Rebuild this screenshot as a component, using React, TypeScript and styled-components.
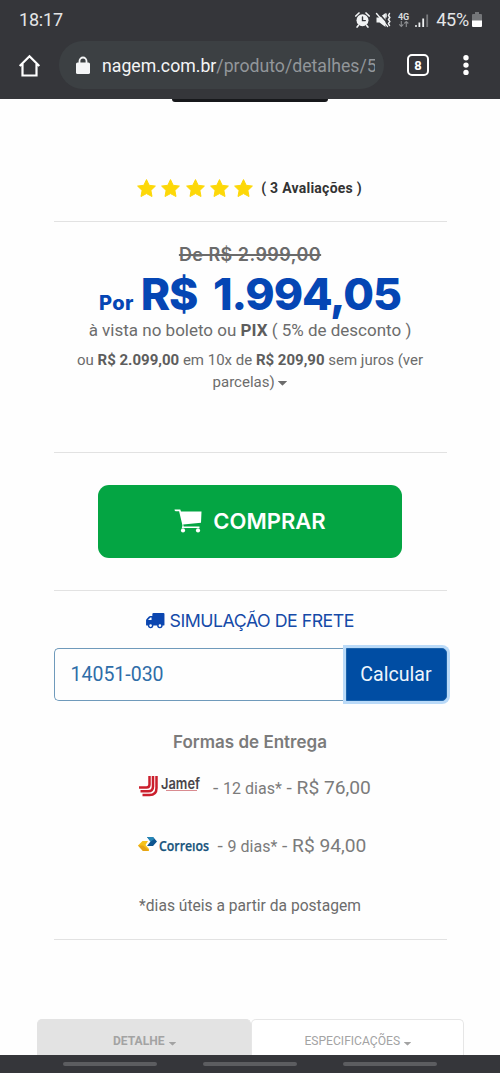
import React from "react";
import styled, { createGlobalStyle } from "styled-components";

const GlobalStyle = createGlobalStyle`
  * { box-sizing: border-box; }
  body { margin: 0; background: #fff; font-family: Roboto, "Liberation Sans", sans-serif; }
  svg { flex: none; overflow: visible; }
`;

const Screen = styled.div`
  width: 500px;
  height: 1073px;
  display: flex;
  flex-direction: column;
  overflow: hidden;
  background: #fefefe;
`;

const BrowserChrome = styled.header`
  flex: none;
  height: 99px;
  background: #35363a;
  color: #f1f3f4;
`;

const StatusBar = styled.div`
  height: 41px;
  padding: 0 18px 2px 19px;
  display: flex;
  align-items: center;
  justify-content: space-between;
  font-size: 18px;
  letter-spacing: -0.2px;
  color: #e4e5e7;
`;

const StatusIcons = styled.div`
  display: flex;
  align-items: center;
`;

const Battery = styled.span`
  margin: 0 3px 0 6px;
  letter-spacing: -0.2px;
`;

const Toolbar = styled.div`
  height: 48px;
  display: flex;
  align-items: center;
  padding-left: 18px;
`;

const AddressBar = styled.div`
  width: 325px;
  height: 48px;
  margin-left: 17px;
  border-radius: 24px;
  background: #3c4043;
  display: flex;
  align-items: center;
  padding-left: 17px;
`;

const Url = styled.div`
  width: 273px;
  margin-left: 12px;
  padding-top: 1px;
  overflow: hidden;
  white-space: nowrap;
  font-size: 17.7px;
  line-height: 24px;
  color: #f4f5f6;
  span { color: #92969a; letter-spacing: 0; }
`;

const TabCount = styled.div`
  width: 22px;
  height: 22px;
  margin-left: 23px;
  border: 2px solid #fff;
  border-radius: 5px;
  display: grid;
  place-items: center;
  font: bold 13px/1 Roboto, sans-serif;
  color: #fff;
`;

const MenuButton = styled.div`
  margin-left: 34px;
  display: flex;
`;

const Page = styled.main`
  flex: 1;
  min-height: 0;
  display: flex;
  flex-direction: column;
  align-items: center;
`;

const ProductEdge = styled.div`
  flex: none;
  width: 156px;
  height: 3px;
  border-radius: 0 0 4px 4px;
  background: #17181b;
`;

const Section = styled.section<{ $height: number; $top?: number }>`
  flex: none;
  width: 393px;
  height: ${(p) => p.$height}px;
  padding-top: ${(p) => p.$top ?? 0}px;
  border-bottom: 1px solid #e2e2e2;
  display: flex;
  flex-direction: column;
  align-items: center;
`;

const Rating = styled.div`
  display: flex;
  align-items: center;
  height: 22px;
  margin-right: 1px;
`;

const Stars = styled.div`
  display: flex;
  gap: 5.3px;
`;

const Reviews = styled.strong`
  margin-left: 8px;
  font-size: 14px;
  color: #333;
  white-space: nowrap;
  letter-spacing: 0.25px;
`;

const OldPrice = styled.div`
  height: 22px;
  font: 600 18px/22px Inter, sans-serif;
  letter-spacing: 0.45px;
  color: #6b6b6b;
  text-decoration: line-through;
  text-decoration-thickness: 1.5px;
`;

const Price = styled.div`
  height: 50px;
  margin-top: 3px;
  display: flex;
  align-items: baseline;
  gap: 7px;
  white-space: nowrap;
  font: 800 44.5px/50px Inter, sans-serif;
  letter-spacing: -1.1px;
  word-spacing: 7px;
  color: #0546b4;
`;

const PricePrefix = styled.span`
  font-size: 20px;
  letter-spacing: 0.3px;
`;

const Terms = styled.div<{ $size: number; $line: number; $spacing?: number; $top?: number }>`
  margin-top: ${(p) => p.$top ?? 0}px;
  font-size: ${(p) => p.$size}px;
  line-height: ${(p) => p.$line}px;
  letter-spacing: ${(p) => p.$spacing ?? 0}px;
  color: #6c6c6c;
  white-space: nowrap;
  text-align: center;
  strong { color: #5d5d5d; }
  svg { vertical-align: 2px; }
`;

const BuyButton = styled.button`
  width: 304px;
  height: 73px;
  padding: 0 0 1px;
  border: 0;
  border-radius: 11px;
  background: #04a543;
  color: #fff;
  display: flex;
  align-items: center;
  justify-content: center;
  gap: 11px;
  font: 600 22px Inter, sans-serif;
`;

const ShippingTitle = styled.h2`
  margin: 0;
  height: 24px;
  display: flex;
  align-items: center;
  gap: 5px;
  white-space: nowrap;
  font: 400 17.8px/24px Inter, sans-serif;
  letter-spacing: -0.5px;
  color: #154aa8;
`;

const ZipForm = styled.div`
  width: 393px;
  height: 53px;
  margin-top: 15px;
  display: flex;
`;

const ZipInput = styled.div`
  flex: 1;
  border: 1.5px solid #6f9abb;
  border-right: 0;
  border-radius: 5px 0 0 5px;
  padding-left: 16px;
  display: flex;
  align-items: center;
  font-size: 19.5px;
  color: #2e6da8;
`;

const CalcButton = styled.button`
  width: 101px;
  padding: 0;
  border: 1px solid #1c63aa;
  border-radius: 0 5px 5px 0;
  background: #004da3;
  box-shadow: 0 0 0 3px #badaf8;
  color: #eef5fc;
  font: 400 19.6px Roboto, sans-serif;
`;

const DeliveryTitle = styled.h3`
  margin: 29px 0 0;
  font: 600 17px/24px Inter, sans-serif;
  letter-spacing: 0;
  color: #7b7b7b;
`;

const Option = styled.div<{ $top: number; $left: number }>`
  align-self: flex-start;
  height: 30px;
  margin: ${(p) => p.$top}px 0 0 ${(p) => p.$left}px;
  display: flex;
  align-items: center;
  white-space: nowrap;
`;

const Quote = styled.div<{ $gap: number }>`
  margin-left: ${(p) => p.$gap}px;
  padding-top: 2px;
  font-size: 19.2px;
  line-height: 30px;
  color: #7b7b7b;
`;

const Days = styled.span`
  font-size: 16px;
`;

const Tabs = styled.nav`
  flex: none;
  width: 427px;
  height: 36px;
  margin: 79px 0 0 1px;
  display: flex;
`;

const Tab = styled.div<{ $active?: boolean }>`
  flex: 1;
  padding: 7px 0 0 1px;
  border: 1px solid ${(p) => (p.$active ? "#e3e3e3" : "#e6e6e6")};
  border-bottom: 0;
  border-radius: 5px 5px 0 0;
  background: ${(p) => (p.$active ? "#e3e3e3" : "#fff")};
  display: flex;
  align-items: center;
  justify-content: center;
  gap: 4px;
  font-size: 12.1px;
  font-weight: ${(p) => (p.$active ? 700 : 400)};
  color: #a3a3a3;
  svg { margin-top: 5px; }
`;

const NavBar = styled.footer`
  flex: none;
  height: 18px;
  padding-top: 7px;
  background: #35363a;
  display: flex;
  justify-content: center;
  gap: 46px;
`;

const NavPill = styled.span`
  width: 94px;
  height: 4px;
  border-radius: 2px;
  background: #5c5d60;
`;

const SystemIcons = () => (
  <svg width="76" height="18" viewBox="0 0 76 18">
    <g stroke="#f1f3f4" fill="none" strokeLinecap="round">
      <circle cx="8.5" cy="9.3" r="6" fill="#f1f3f4" stroke="none" />
      <path d="M1.8 5 5 2M12 2l3.200 3M4.300 14.500 3.100 16M12.700 14.500l1.200 1.500" strokeWidth="1.7" />
      <path d="M8.500 6v3.600h2.800" stroke="#35363a" strokeWidth="1.4" />
      <path d="M22.500 6.500h3l6-4.500V16l-6-4.500h-3z" fill="#f1f3f4" stroke="none" />
      <path d="M25 2.500 34 12.500" stroke="#35363a" strokeWidth="1.500" />
      <path d="M22.500 2.500 33.500 15.400" strokeWidth="1.4" />
      <path d="M32 3v3M35.500 2.500l-1 2 1.300 2-1.300 2 1.300 2-1.300 2 1 2" strokeWidth="1.500" />
    </g>
    <text x="44" y="8.500" fontFamily="Roboto" fontSize="9" fontWeight="700" fill="#d8dadc">4G</text>
    <g stroke="#8c8e91" strokeWidth="1.1" fill="none">
      <path d="M47.3 10v5.5M45.3 13.4l2 2 2-2M52.3 16v-5.5M50.3 12.500l2-2 2 2" />
    </g>
    <g fill="#f1f3f4">
      <circle cx="62" cy="15" r="1" />
      <path d="M64.500 11.500h1.800V16h-1.800zM68.300 7.500h1.800V16h-1.800z" />
      <path d="M72.300 3.500h1.800V16h-1.800z" fill="#77797c" />
    </g>
  </svg>
);

const BatteryIcon = () => (
  <svg width="10" height="15" viewBox="0 0 10 15">
    <path d="M3 0h4v2h2q1 0 1 1v6H0V3q0-1 1-1h2z" fill="#747679" />
    <path d="M0 8.500h10V14q0 1-1 1H1q-1 0-1-1z" fill="#fff" />
  </svg>
);

const HomeIcon = () => (
  <svg width="24" height="24" viewBox="0 0 24 24" fill="none" stroke="#fff" strokeWidth="2.200">
    <path d="M1.700 13 11.500 3.200l9.800 9.800M4.500 11V22.500h14V11" />
  </svg>
);

const LockIcon = () => (
  <svg width="14" height="19" viewBox="0 0 14 19">
    <path d="M3.500 8V5a3.500 3.500 0 0 1 7 0v3" fill="none" stroke="#f4f5f6" strokeWidth="1.800" />
    <rect x="0" y="6.500" width="14" height="11.500" rx="1.600" fill="#f4f5f6" />
  </svg>
);

const MenuIcon = () => (
  <svg width="6" height="22" viewBox="0 0 6 22" fill="#fff">
    <circle cx="3" cy="3.800" r="2.700" />
    <circle cx="3" cy="11.100" r="2.700" />
    <circle cx="3" cy="18.400" r="2.700" />
  </svg>
);

const StarIcon = () => (
  <svg width="19" height="18" viewBox="0 0 19 18">
    <path
      d="M9.500.6 12.200 6.300 18.400 7.100 13.900 11.400 15 17.500 9.500 14.600 4 17.500 5.100 11.400.6 7.100 6.800 6.300z"
      fill="#fdd808" stroke="#fdd808" strokeWidth="1" strokeLinejoin="round"
    />
  </svg>
);

const Caret = ({ width }: { width: number }) => (
  <svg width={width} height={width / 2} viewBox="0 0 8 4" fill="currentColor">
    <path d="M.5 0h7q.6.1.3.5L4.400 3.800q-.4.3-.8 0L.2.5Q-.1.1.5 0z" />
  </svg>
);

const CartIcon = () => (
  <svg width="28" height="24" viewBox="0 0 27 24" fill="#fff">
    <path d="M0 .5h5.800L6.500 2.500H27l-.5 11.200-17.800 1.800.5 2H25v1.500H7.300L8 16.500 4.600 2.300H1.200Q0 2 0 .5z" />
    <circle cx="8.500" cy="21.400" r="2.100" />
    <circle cx="23.500" cy="21.400" r="2.100" />
  </svg>
);

const TruckIcon = () => (
  <svg width="18.500" height="15.500" viewBox="0 0 19 16">
    <path d="M6.500 1.200Q6.500 0 7.700 0H18q1 0 1 1v11q0 1-1 1H1Q0 13 0 12V7.500q0-.8.6-1.400L3 3.600q.5-.6 1.400-.6h2.100z" fill="#0b46b0" />
    <path d="M2 7.300 4.500 4.700h1.200v2.600z" fill="#fff" />
    <g fill="#fff" stroke="#0b46b0" strokeWidth="1.500">
      <circle cx="4.700" cy="13" r="2.100" />
      <circle cx="14.300" cy="13" r="2.100" />
    </g>
  </svg>
);

const JamefLogo = () => (
  <svg width="63" height="22" viewBox="0 0 63 22">
    <g fill="none" stroke="#cb1f2d" strokeWidth="2.500">
      <path d="M11.500 0v8.500q0 3-3 3H1" />
      <path d="M15 0v10.500q0 4.800-4.800 4.800H2.500" />
      <path d="M18.500 0v12q0 7-7 7H4.500" />
    </g>
    <text x="23" y="12.500" fontFamily="Inter" fontSize="15" fontWeight="600" fill="#4a464a" textLength="39" lengthAdjust="spacingAndGlyphs">Jamef</text>
    <path d="M28 14.500h31" stroke="#d98b90" strokeWidth="1" />
  </svg>
);

const CorreiosLogo = () => (
  <svg width="72" height="18" viewBox="0 0 72 18">
    <path d="M4.500 5H10L7.500 9l3.500 4v2H5L0 9.500z" fill="#f6c21b" />
    <path d="M0 9.500h5l5.500 4.500-1 1H5z" fill="#e6a316" />
    <path d="M9 1h6l4 4.500-4 4.500H9l3.500-4.500z" fill="#0e5590" />
    <path d="M9 1h6l1.500 2-4 2.500z" fill="#2585b5" />
    <text x="21" y="15" fontFamily="Open Sans" fontSize="13.500" fontWeight="600" fill="#17547c" stroke="#17547c" strokeWidth=".25" textLength="50" lengthAdjust="spacingAndGlyphs">Correıos</text>
  </svg>
);

export default function App() {
  return (
    <Screen>
      <GlobalStyle />
      <BrowserChrome>
        <StatusBar>
          <span>18:17</span>
          <StatusIcons>
            <SystemIcons />
            <Battery>45%</Battery>
            <BatteryIcon />
          </StatusIcons>
        </StatusBar>
        <Toolbar>
          <HomeIcon />
          <AddressBar>
            <LockIcon />
            <Url>nagem.com.br<span>/produto/detalhes/5</span></Url>
          </AddressBar>
          <TabCount>8</TabCount>
          <MenuButton><MenuIcon /></MenuButton>
        </Toolbar>
      </BrowserChrome>
      <Page>
        <ProductEdge />
        <Section $height={120} $top={75}>
          <Rating>
            <Stars>
              {[1, 2, 3, 4, 5].map((n) => <StarIcon key={n} />)}
            </Stars>
            <Reviews>( 3 Avaliações )</Reviews>
          </Rating>
        </Section>
        <Section $height={231} $top={22}>
          <OldPrice>De R$ 2.999,00</OldPrice>
          <Price><PricePrefix>Por</PricePrefix>R$ 1.994,05</Price>
          <Terms $size={17} $line={22}>
            à vista no boleto ou <strong>PIX</strong> ( 5% de desconto )
          </Terms>
          <Terms $size={15} $line={22} $top={8}>
            ou <strong>R$ 2.099,00</strong> em 10x de <strong>R$ 209,90</strong> sem juros (ver<br />
            parcelas) <Caret width={9} />
          </Terms>
        </Section>
        <Section $height={138} $top={32}>
          <BuyButton><CartIcon />COMPRAR</BuyButton>
        </Section>
        <Section $height={349} $top={18}>
          <ShippingTitle><TruckIcon />SIMULAÇÃO DE FRETE</ShippingTitle>
          <ZipForm>
            <ZipInput>14051-030</ZipInput>
            <CalcButton>Calcular</CalcButton>
          </ZipForm>
          <DeliveryTitle>Formas de Entrega</DeliveryTitle>
          <Option $top={18} $left={84}>
            <JamefLogo />
            <Quote $gap={12.5}>- <Days>12 dias*</Days> - R$ 76,00</Quote>
          </Option>
          <Option $top={28} $left={84}>
            <CorreiosLogo />
            <Quote $gap={8}>- <Days>9 dias*</Days> - R$ 94,00</Quote>
          </Option>
          <Terms $size={15.6} $line={24} $top={34}>*dias úteis a partir da postagem</Terms>
        </Section>
        <Tabs>
          <Tab $active>DETALHE <Caret width={7} /></Tab>
          <Tab>ESPECIFICAÇÕES <Caret width={7} /></Tab>
        </Tabs>
      </Page>
      <NavBar><NavPill /><NavPill /><NavPill /></NavBar>
    </Screen>
  );
}
